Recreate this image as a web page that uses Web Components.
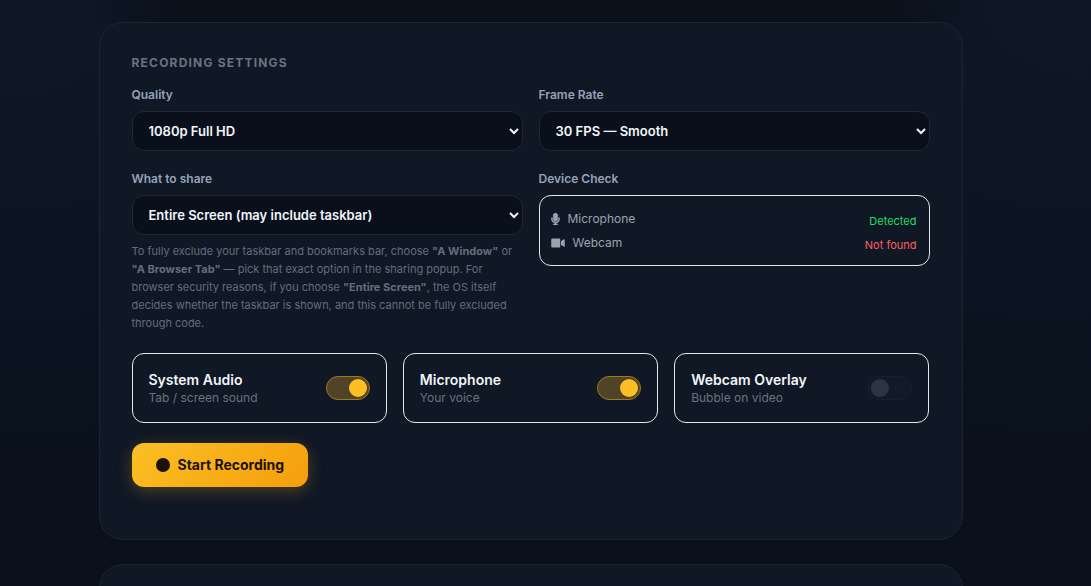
<!DOCTYPE html>
<html lang="en">
<head>
<meta charset="utf-8">
<meta name="viewport" content="width=device-width, initial-scale=1">
<title>Screen Recorder</title>
<style>
  html { background: #0a111d; }
  body { margin: 0; font-family: Inter, "Liberation Sans", sans-serif; color: #f1f5f9; }
</style>
</head>
<body>
<recorder-page>
  <panel-card heading="Recording Settings">
    <settings-grid>
      <select-field label="Quality" options="1080p Full HD|720p HD|480p SD"></select-field>
      <select-field label="Frame Rate" options="30 FPS — Smooth|60 FPS — Ultra|24 FPS — Cinematic"></select-field>
      <select-field label="What to share" options="Entire Screen (may include taskbar)|A Window|A Browser Tab">To fully exclude your taskbar and bookmarks bar, choose <b>"A Window"</b> or <b>"A Browser Tab"</b> — pick that exact option in the sharing popup. For browser security reasons, if you choose <b>"Entire Screen"</b>, the OS itself decides whether the taskbar is shown, and this cannot be fully excluded through code.</select-field>
      <device-check label="Device Check">
        <device-row icon="mic" name="Microphone" status="Detected" ok></device-row>
        <device-row icon="cam" name="Webcam" status="Not found"></device-row>
      </device-check>
    </settings-grid>
    <toggle-grid>
      <toggle-card name="System Audio" note="Tab / screen sound" on></toggle-card>
      <toggle-card name="Microphone" note="Your voice" on></toggle-card>
      <toggle-card name="Webcam Overlay" note="Bubble on video"></toggle-card>
    </toggle-grid>
    <record-button>Start Recording</record-button>
  </panel-card>
  <panel-card></panel-card>
</recorder-page>

<script>
const define = (name, render) => customElements.define(name, class extends HTMLElement {
  connectedCallback() {
    if (this.shadowRoot) return;
    this.attachShadow({ mode: "open" }).innerHTML = render(this);
  }
});
const attr = (el, name) => el.getAttribute(name) || "";

define("recorder-page", () => `
  <style>
    :host {
      display: block; box-sizing: border-box; min-height: 100vh;
      padding: 22px 30px 0 0;
      background:
        linear-gradient(to right, transparent 8%, #0b111b 16%, #0b111b 82%, transparent 90%) 0 0 / 100% 22px no-repeat,
        radial-gradient(ellipse 60% 480px at 0 0, #0e1827, transparent),
        radial-gradient(ellipse 60% 480px at 100% 0, #0e1826, transparent),
        #0a111d;
    }
    main { display: flex; flex-direction: column; gap: 24px; max-width: 864px; margin: 0 auto; }
  </style>
  <main><slot></slot></main>`);

define("panel-card", el => `
  <style>
    :host {
      display: block; box-sizing: border-box; padding: 32px 32px 52px;
      border: 1px solid #1c2431; border-radius: 24px; background: #101725;
    }
    h2 {
      margin: 0 0 16px; font-size: 12px; line-height: 16px; font-weight: 700;
      letter-spacing: 0.1em; text-transform: uppercase; color: #6b7280;
    }
  </style>
  ${el.hasAttribute("heading") ? `<h2>${attr(el, "heading")}</h2>` : ""}
  <slot></slot>`);

define("settings-grid", () => `
  <style>
    :host { display: grid; grid-template-columns: repeat(auto-fit, minmax(280px, 1fr)); gap: 20px 16px; align-items: start; }
  </style>
  <slot></slot>`);

define("toggle-grid", () => `
  <style>
    :host { display: grid; grid-template-columns: repeat(auto-fit, minmax(220px, 1fr)); gap: 16px; margin: 21px 0 20px; }
  </style>
  <slot></slot>`);

define("select-field", el => `
  <style>
    :host { display: block; min-width: 0; }
    label { display: block; margin-bottom: 8px; font-size: 12px; line-height: 16px; font-weight: 600; color: #94a3b8; }
    select {
      display: block; box-sizing: border-box; width: 100%; height: 40px; padding: 0 12px;
      border: 1px solid #1f2735; border-radius: 12px; background: #09101c;
      font: 600 13px Inter, "Liberation Sans", sans-serif; color: #f1f5f9;
    }
    p { margin: 7px 0 0; font-size: 11px; line-height: 18px; color: #656d7b; }
  </style>
  <label for="choice">${attr(el, "label")}</label>
  <select id="choice">${attr(el, "options").split("|").map(o => `<option>${o}</option>`).join("")}</select>
  ${el.textContent.trim() ? "<p><slot></slot></p>" : ""}`);

define("device-check", el => `
  <style>
    :host { display: block; }
    h3 { margin: 0 0 8px; font-size: 12px; line-height: 16px; font-weight: 600; color: #94a3b8; }
    div { display: grid; gap: 4px; padding: 13px 12px 12px 11px; border: 1px solid #e5e7eb; border-radius: 12px; }
  </style>
  <h3>${attr(el, "label")}</h3>
  <div><slot></slot></div>`);

const icons = {
  mic: `<svg width="9" height="12" viewBox="0 0 384 512"><path fill="currentColor" stroke="currentColor" stroke-width="20" d="M192 0c-53 0-96 43-96 96v160c0 53 43 96 96 96s96-43 96-96V96c0-53-43-96-96-96zM64 216c0-13-11-24-24-24s-24 11-24 24v40c0 89 66 163 152 174v34h-48c-13 0-24 11-24 24s11 24 24 24h144c13 0 24-11 24-24s-11-24-24-24h-48v-34c86-11 152-85 152-174v-40c0-13-11-24-24-24s-24 11-24 24v40c0 71-57 128-128 128S64 327 64 256v-40z"/></svg>`,
  cam: `<svg width="14" height="12" viewBox="0 0 576 512"><path fill="currentColor" d="M0 112c0-27 21-48 48-48h288c27 0 48 21 48 48v288c0 27-21 48-48 48H48c-27 0-48-21-48-48V112zM559 100c11 5 17 16 17 28v256c0 12-6 23-17 28s-23 5-33-2l-96-64-14-9V175l14-9 96-64c10-7 23-7 33-2z"/></svg>`
};

define("device-row", el => `
  <style>
    :host { display: flex; justify-content: space-between; height: 20px; color: #9ca3af; }
    .name { display: flex; align-items: center; gap: 8px; font-size: 12px; line-height: 20px; }
    .status { font-size: 11px; line-height: 24px; color: ${el.hasAttribute("ok") ? "#22dd62" : "#f8615f"}; }
  </style>
  <span class="name">${icons[attr(el, "icon")]}<span>${attr(el, "name")}</span></span>
  <span class="status">${attr(el, "status")}</span>`);

define("toggle-card", el => `
  <style>
    :host { display: block; }
    label {
      display: flex; align-items: center; justify-content: space-between; gap: 12px;
      box-sizing: border-box; min-height: 70px; padding: 0 16px;
      border: 1px solid #e5e7eb; border-radius: 12px; cursor: pointer;
    }
    strong { display: block; font-size: 14px; line-height: 20px; font-weight: 600; color: #f1f5f9; }
    small { display: block; font-size: 12px; line-height: 16px; color: #6b7280; }
    input {
      appearance: none; flex: none; display: flex; box-sizing: border-box; width: 44px; height: 24px;
      margin: 0; padding: 2px; border: 1px solid #162130; border-radius: 12px; background: #111b28; cursor: pointer;
    }
    input::before { content: ""; width: 18px; height: 18px; border-radius: 50%; background: #2b3544; }
    input:checked { justify-content: flex-end; border-color: #a17a1c; background: #4f4428; }
    input:checked::before { background: #fbbf24; }
  </style>
  <label>
    <span><strong>${attr(el, "name")}</strong><small>${attr(el, "note")}</small></span>
    <input type="checkbox" role="switch" ${el.hasAttribute("on") ? "checked" : ""}>
  </label>`);

define("record-button", () => `
  <style>
    :host { display: block; }
    button {
      display: inline-flex; align-items: center; gap: 8px; height: 44px; padding: 0 24px;
      border: 0; border-radius: 12px; background: linear-gradient(135deg, #fbbf24, #f59e0b);
      box-shadow: 0 4px 16px rgba(251, 191, 36, .25);
      font: 700 14px/20px Inter, "Liberation Sans", sans-serif; color: #1a1206; cursor: pointer;
    }
    svg { display: block; }
  </style>
  <button type="button"><svg width="14" height="14" viewBox="0 0 14 14"><circle cx="7" cy="7" r="7" fill="currentColor"/></svg><slot></slot></button>`);
</script>
</body>
</html>
